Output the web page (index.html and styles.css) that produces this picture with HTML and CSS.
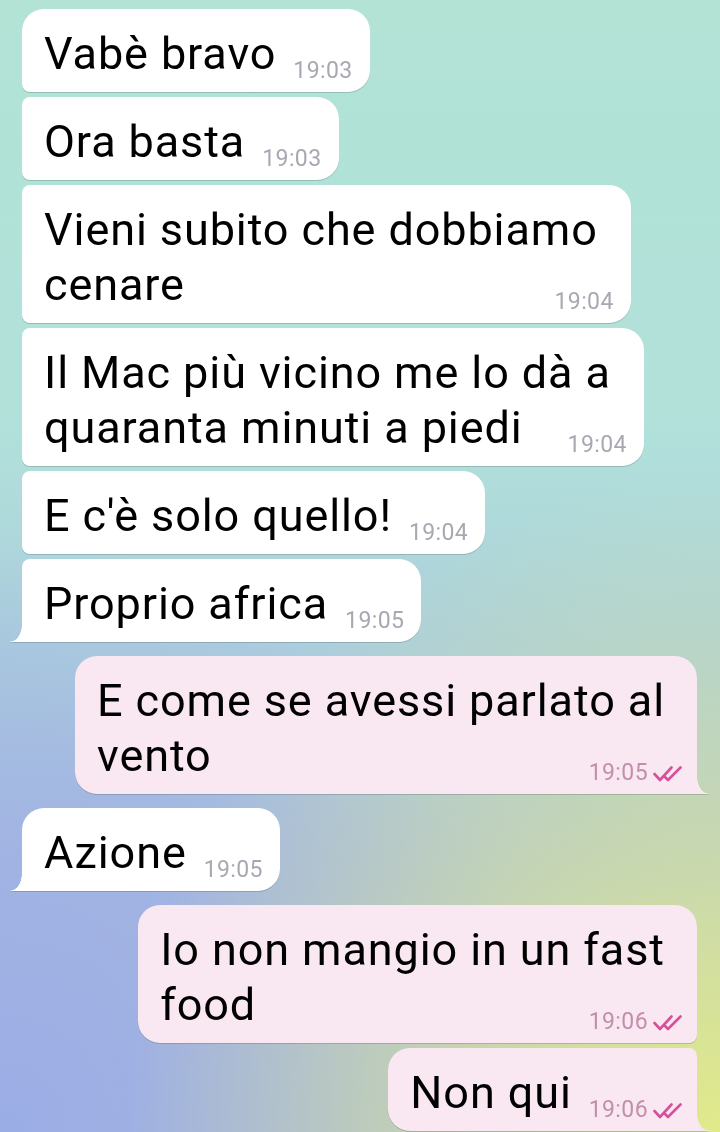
FILE: index.html
```html
<!DOCTYPE html>
<html>
<head>
    <meta charset="UTF-8">
    <meta name="viewport" content="width=device-width, initial-scale=1">
    <title>Chat</title>
    <link rel="stylesheet" href="styles.css">
</head>

<body>
    <div class="chat">
        <div class="group in">
            <div class="bubble first">Vabè bravo<span class="time">19:03</span></div>
            <div class="bubble">Ora basta<span class="time">19:03</span></div>
            <div class="bubble multi">Vieni subito che dobbiamo<br>cenare<span class="time">19:04</span></div>
            <div class="bubble multi">Il Mac più vicino me lo dà a<br>quaranta minuti a piedi<span class="time">19:04</span></div>
            <div class="bubble">E c'è solo quello!<span class="time">19:04</span></div>
            <div class="bubble tail">Proprio africa<span class="time">19:05</span></div>
        </div>

        <div class="group out">
            <div class="bubble multi first tail">E come se avessi parlato al<br>vento<span class="time">19:05<svg class="check" viewBox="0 0 30 16"><path d="M1.5 8 L7 14 L18.5 1.5"/><path d="M12 11 L15 14 L27.5 1.5"/></svg></span></div>
        </div>

        <div class="group in">
            <div class="bubble first tail">Azione<span class="time">19:05</span></div>
        </div>

        <div class="group out">
            <div class="bubble multi first">Io non mangio in un fast<br>food<span class="time">19:06<svg class="check" viewBox="0 0 30 16"><path d="M1.5 8 L7 14 L18.5 1.5"/><path d="M12 11 L15 14 L27.5 1.5"/></svg></span></div>
            <div class="bubble tail">Non qui<span class="time">19:06<svg class="check" viewBox="0 0 30 16"><path d="M1.5 8 L7 14 L18.5 1.5"/><path d="M12 11 L15 14 L27.5 1.5"/></svg></span></div>
        </div>
    </div>
</body>
</html>
```

FILE: styles.css
```css
html, body {
    margin: 0;
    height: 100%;
}

body {
    font-family: Roboto, 'Noto Sans', sans-serif;
    color: #000;
    background:
        radial-gradient(ellipse 82% 58% at 100% 100%, #e1ea8a 0%, rgba(222, 233, 140, 0.6) 40%, rgba(222, 233, 140, 0) 100%),
        radial-gradient(ellipse 80% 52% at 0% 100%, #9badE6 0%, rgba(156, 172, 230, 0.65) 45%, rgba(156, 172, 230, 0) 100%),
        linear-gradient(180deg, #b2e3d5 0%, #b1e1da 38%, #acd0dc 55%, #aac0de 75%, #adbfd6 100%);
    overflow: hidden;
}

.chat {
    display: flex;
    flex-direction: column;
    gap: 14px;
    padding: 9px 23px 0 22px;
}

.group {
    display: flex;
    flex-direction: column;
    gap: 5px;
}

.group.in {
    align-items: flex-start;
}

.group.out {
    align-items: flex-end;
}

.bubble {
    position: relative;
    display: inline-block;
    font-size: 45px;
    letter-spacing: 0.9px;
    line-height: 55px;
    padding: 17px 17px 11px 22px;
    background: #fff;
    border-radius: 8px 22px 22px 8px;
    filter: drop-shadow(0 1px 0.6px rgba(40, 60, 60, 0.22));
}

.in .bubble.first {
    border-top-left-radius: 22px;
}

.out .bubble {
    background: #f9e8f1;
    border-radius: 22px 8px 8px 22px;
    padding-right: 14px;
}

.out .bubble.first {
    border-top-right-radius: 22px;
}

/* wrapped messages keep extra room on the right */
.bubble.multi {
    padding-right: 33px;
}

.time {
    float: right;
    display: flex;
    align-items: center;
    margin: 35px 0 0 17px;
    font-size: 23px;
    letter-spacing: 0.4px;
    line-height: 20px;
    color: #a8a8b2;
}

.multi .time {
    margin-right: -16px;
}

.out .bubble.multi {
    padding-right: 32px;
}

.out .multi .time {
    margin-right: -18px;
}

.out .time {
    color: #c18fac;
}

.check {
    width: 30px;
    height: 16px;
    margin-left: 5px;
    margin-top: 1px;
    fill: none;
    stroke: #d6509b;
    stroke-width: 2.6;
    stroke-linecap: round;
    stroke-linejoin: round;
}

/* tail on the last bubble of a group */
.in .bubble.tail {
    border-bottom-left-radius: 0;
}

.out .bubble.tail {
    border-bottom-right-radius: 0;
}

.bubble.tail::after {
    content: "";
    position: absolute;
    bottom: 0;
    width: 12px;
    height: 17px;
}

.in .bubble.tail::after {
    left: -12px;
    background: radial-gradient(ellipse 12px 17px at 0 0, rgba(255, 255, 255, 0) 96%, #fff 100%);
}

.out .bubble.tail::after {
    right: -12px;
    background: radial-gradient(ellipse 12px 17px at 100% 0, rgba(249, 232, 241, 0) 96%, #f9e8f1 100%);
}
```
